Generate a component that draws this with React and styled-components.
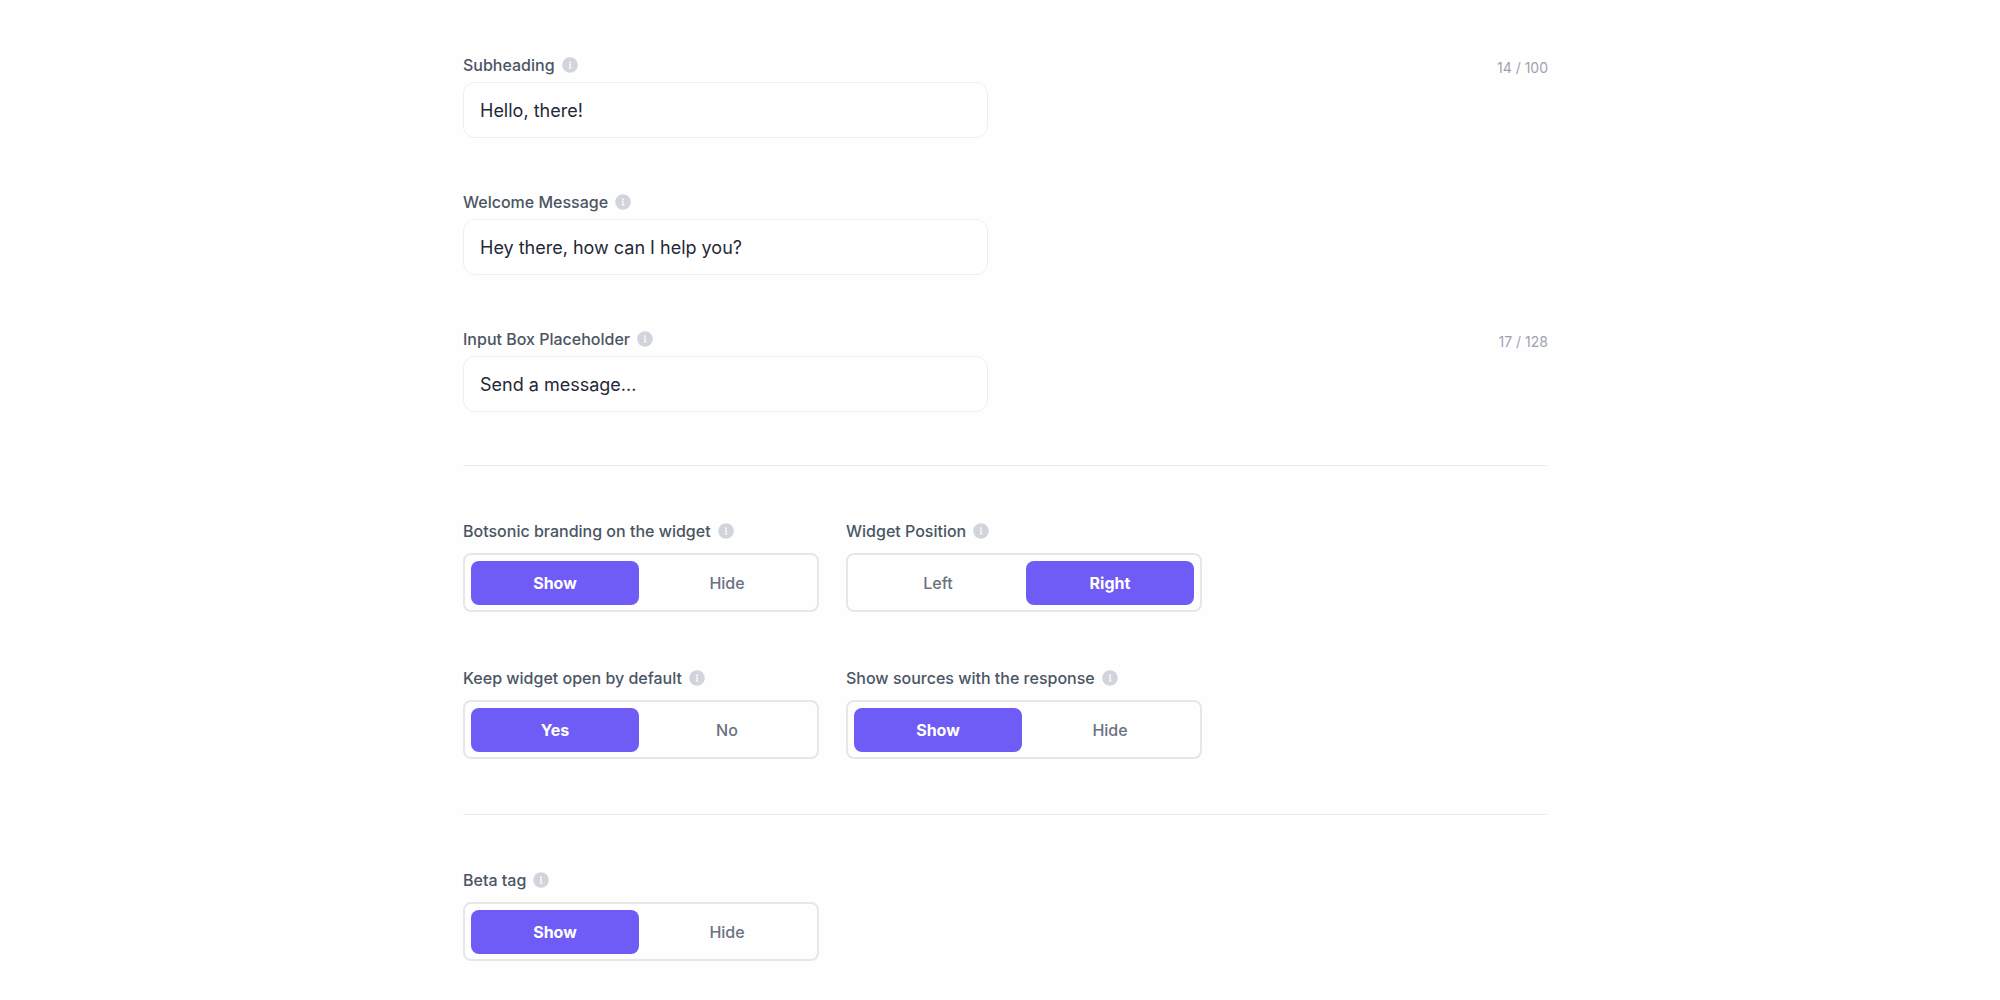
import React, { useState } from "react";
import styled, { createGlobalStyle } from "styled-components";

const textFields = [
  { id: "subheading", label: "Subheading", value: "Hello, there! ", max: 100 },
  {
    id: "welcome",
    label: "Welcome Message",
    value: "Hey there, how can I help you?",
  },
  {
    id: "placeholder",
    label: "Input Box Placeholder",
    value: "Send a message...",
    max: 128,
  },
];

const widgetToggles = [
  {
    id: "branding",
    label: "Botsonic branding on the widget",
    options: ["Show", "Hide"],
    initial: "Show",
  },
  {
    id: "position",
    label: "Widget Position",
    options: ["Left", "Right"],
    initial: "Right",
  },
  {
    id: "open",
    label: "Keep widget open by default",
    options: ["Yes", "No"],
    initial: "Yes",
  },
  {
    id: "sources",
    label: "Show sources with the response",
    options: ["Show", "Hide"],
    initial: "Show",
  },
];

const betaToggle = {
  id: "beta",
  label: "Beta tag",
  options: ["Show", "Hide"],
  initial: "Show",
};

const InfoIcon = () => (
  <Icon viewBox="0 0 16 16" aria-hidden="true">
    <circle cx="8" cy="8" r="7.8" fill="#d1d5db" />
    <circle cx="8" cy="5.2" r="0.9" fill="#fff" />
    <path
      d="M7 7.3h1.1v3.6M6.8 11h2.6"
      fill="none"
      stroke="#fff"
      strokeWidth="1.1"
    />
  </Icon>
);

const TextField = ({ id, label, value, max }) => {
  const [text, setText] = useState(value);

  return (
    <div>
      <FieldHeader>
        <LabelRow>
          <Label htmlFor={id}>{label}</Label>
          <InfoIcon />
        </LabelRow>
        {max && (
          <Counter>
            {text.length} / {max}
          </Counter>
        )}
      </FieldHeader>
      <Input
        id={id}
        type="text"
        value={text}
        maxLength={max}
        onChange={(ev) => setText(ev.target.value)}
      />
    </div>
  );
};

const Toggle = ({ id, label, options, initial }) => {
  const [selected, setSelected] = useState(initial);

  return (
    <div>
      <LabelRow>
        <Label as="span" id={id}>
          {label}
        </Label>
        <InfoIcon />
      </LabelRow>
      <Segments role="group" aria-labelledby={id}>
        {options.map((option) => (
          <Segment
            key={option}
            type="button"
            aria-pressed={option === selected}
            $active={option === selected}
            onClick={() => setSelected(option)}
          >
            {option}
          </Segment>
        ))}
      </Segments>
    </div>
  );
};

const App = () => {
  return (
    <Page>
      <GlobalStyle />
      <Form onSubmit={(ev) => ev.preventDefault()}>
        <Fields>
          {textFields.map((field) => (
            <TextField key={field.id} {...field} />
          ))}
        </Fields>
        <Divider />
        <Toggles>
          {widgetToggles.map((toggle) => (
            <Toggle key={toggle.id} {...toggle} />
          ))}
        </Toggles>
        <Divider />
        <Toggles>
          <Toggle {...betaToggle} />
        </Toggles>
      </Form>
    </Page>
  );
};

export default App;

const GlobalStyle = createGlobalStyle`
  *, *::before, *::after {
    box-sizing: border-box;
  }
  body {
    margin: 0;
    background-color: #fefefe;
    font-family: Inter, "Liberation Sans", sans-serif;
    -webkit-font-smoothing: antialiased;
  }
`;

const Page = styled.main`
  padding: 53px 24px 0 35px;
`;

const Form = styled.form`
  max-width: 1085px;
  margin: 0 auto;
`;

const Fields = styled.div`
  display: flex;
  flex-direction: column;
  gap: 52px;
  padding-bottom: 53px;
`;

const FieldHeader = styled.div`
  display: flex;
  justify-content: space-between;
  align-items: flex-end;
  margin-bottom: 5px;
`;

const LabelRow = styled.div`
  display: flex;
  align-items: center;
  gap: 7px;
  height: 24px;
`;

const Label = styled.label`
  color: #4b5563;
  font-size: 16px;
  font-weight: 500;
  line-height: 24px;
`;

const Icon = styled.svg`
  width: 16px;
  height: 16px;
  flex-shrink: 0;
`;

const Counter = styled.span`
  color: #9ca3af;
  font-size: 14px;
  line-height: 18px;
`;

const Input = styled.input`
  display: block;
  width: 100%;
  max-width: 525px;
  height: 56px;
  padding: 0 16px;
  border: 1px solid #eeeff1;
  border-radius: 12px;
  background-color: #fff;
  color: #1f2937;
  font-family: inherit;
  font-size: 18px;
`;

const Divider = styled.hr`
  height: 1px;
  margin: 0;
  border: none;
  background-color: #ebecee;
`;

const Toggles = styled.div`
  display: grid;
  grid-template-columns: repeat(auto-fill, 356px);
  gap: 54px 27px;
  max-width: 760px;
  padding: 53px 0 55px;
`;

const Segments = styled.div`
  display: grid;
  grid-template-columns: 1fr 1fr;
  gap: 4px;
  margin-top: 10px;
  padding: 6px 6px 5px;
  border: 2px solid #e5e7eb;
  border-radius: 8px;
`;

const Segment = styled.button`
  height: 44px;
  padding: 0;
  border: none;
  border-radius: 8px;
  background-color: ${({ $active }) => ($active ? "#6f5cf7" : "transparent")};
  color: ${({ $active }) => ($active ? "#fff" : "#6b7280")};
  font-family: inherit;
  font-size: 16px;
  font-weight: ${({ $active }) => ($active ? 700 : 500)};
  cursor: pointer;
`;
